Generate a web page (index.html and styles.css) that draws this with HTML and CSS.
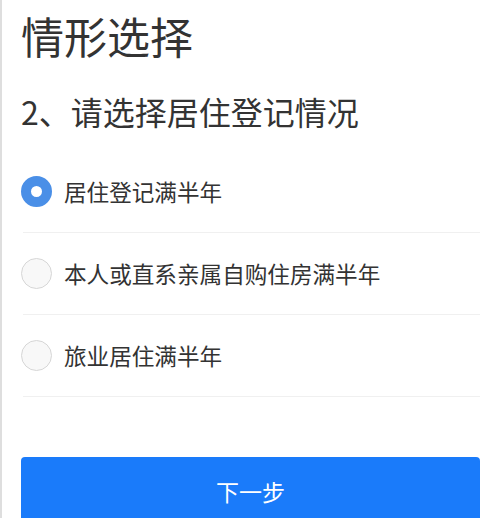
FILE: index.html
```html
<!DOCTYPE html>
<html lang="zh-CN">
<head>
  <meta charset="UTF-8" />
  <meta name="viewport" content="width=device-width, initial-scale=1.0"/>
  <title>情形选择</title>
  <link rel="stylesheet" href="styles.css">
</head>
<body>
<div class="page">
  <h1 class="title">情形选择</h1>
  <h2 class="question">2、请选择居住登记情况</h2>

  <ul class="options">
    <li class="option checked">
      <span class="radio"></span>
      <span class="label">居住登记满半年</span>
    </li>
    <li class="option">
      <span class="radio"></span>
      <span class="label">本人或直系亲属自购住房满半年</span>
    </li>
    <li class="option">
      <span class="radio"></span>
      <span class="label">旅业居住满半年</span>
    </li>
  </ul>

  <a href="#" class="next-btn">下一步</a>
</div>
</body>
</html>
```

FILE: styles.css
```css
* { margin: 0; padding: 0; box-sizing: border-box; }
html, body {
  height: 100%;
  overflow: hidden;
  background: #fff;
  font-family: "Noto Sans CJK SC", "Noto Sans", sans-serif;
  color: #333;
}
body {
  border-left: 2px solid #dedede;
}
.page {
  padding: 0 18px 0 19px;
}
.title {
  font-size: 43px;
  font-weight: 400;
  line-height: 70px;
}
.question {
  margin-top: 20px;
  font-size: 32px;
  font-weight: 400;
  line-height: 42px;
}
.options {
  list-style: none;
  margin-top: 19px;
}
.option {
  display: flex;
  align-items: center;
  gap: 12px;
  height: 82px;
  border-bottom: 1px solid #f0f0f0;
  margin-left: 2px;
}
.radio {
  width: 31px;
  height: 31px;
  border-radius: 50%;
  border: 1px solid #d6d6d6;
  background: #f8f8f8;
  flex-shrink: 0;
  margin-left: -2px;
}
.option.checked .radio {
  border: 10px solid #4a8fe7;
  background: #fff;
}
.label {
  font-size: 22.6px;
  line-height: 30px;
}
.next-btn {
  display: block;
  margin-top: 60px;
  height: 68px;
  line-height: 68px;
  text-align: center;
  text-decoration: none;
  background: #1a7bfa;
  color: #fff;
  font-size: 23px;
  border-radius: 4px;
}
```
